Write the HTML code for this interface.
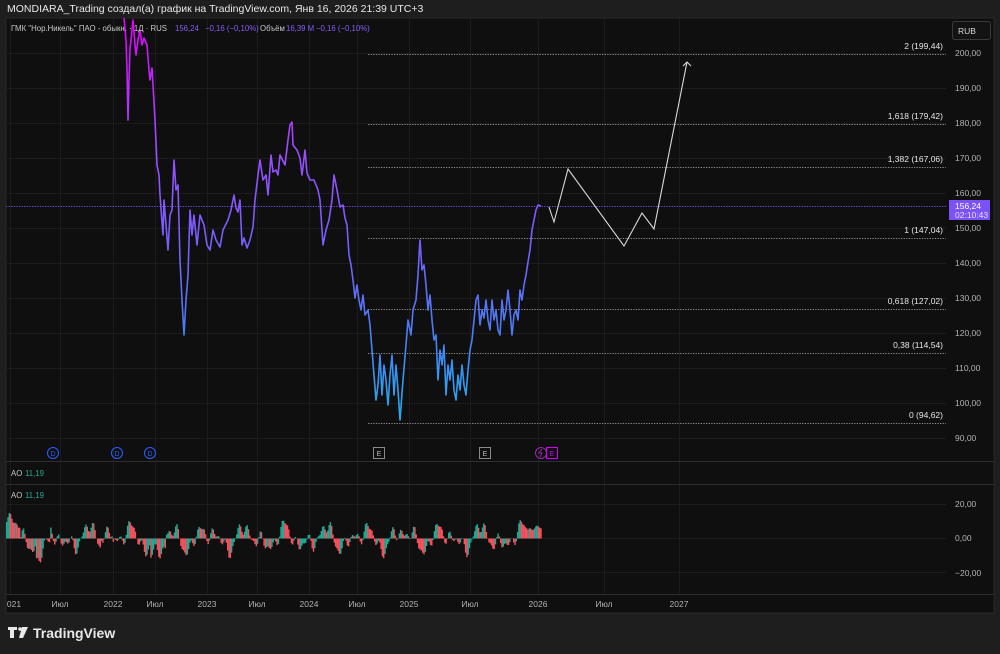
<!DOCTYPE html>
<html><head><meta charset="utf-8">
<style>
html,body{margin:0;padding:0;background:#1e1e1e;width:1000px;height:654px;overflow:hidden;font-family:"Liberation Sans","DejaVu Sans",sans-serif;}
#hdr{position:absolute;left:7px;top:3px;font-size:10.5px;color:#e8e8e8;}
#chart{position:absolute;left:0;top:0;}
</style></head><body>
<svg id="chart" width="1000" height="654" xmlns="http://www.w3.org/2000/svg" font-family="Liberation Sans, DejaVu Sans, sans-serif">
<defs>
<linearGradient id="pg" gradientUnits="userSpaceOnUse" x1="0" y1="20" x2="0" y2="425">
<stop offset="0" stop-color="#e000ff"/>
<stop offset="0.32" stop-color="#9c4dff"/>
<stop offset="0.52" stop-color="#7b5cff"/>
<stop offset="0.77" stop-color="#4a7cf5"/>
<stop offset="1" stop-color="#22b0ee"/>
</linearGradient>
</defs>
<rect x="0" y="0" width="1000" height="654" fill="#1e1e1e"/>
<rect x="6" y="18" width="988" height="595" fill="#0f0f0f" stroke="#2a2a2a" stroke-width="1"/>
<g id="grid" stroke="#1c1c1c" stroke-width="1"></g>
<line x1="6" y1="461.5" x2="994" y2="461.5" stroke="#2e2e2e"/>
<line x1="6" y1="484.5" x2="994" y2="484.5" stroke="#2e2e2e"/>
<line x1="6" y1="594.5" x2="994" y2="594.5" stroke="#2e2e2e"/>
<g stroke="#8a8a8a" stroke-width="1" stroke-dasharray="1.3 1.3">
<line x1="368" y1="54.5" x2="946" y2="54.5"/>
<line x1="368" y1="124.5" x2="946" y2="124.5"/>
<line x1="368" y1="167.5" x2="946" y2="167.5"/>
<line x1="368" y1="238.5" x2="946" y2="238.5"/>
<line x1="368" y1="309.5" x2="946" y2="309.5"/>
<line x1="368" y1="353.5" x2="946" y2="353.5"/>
<line x1="368" y1="423.5" x2="946" y2="423.5"/>
</g>
<line x1="6" y1="206.5" x2="946" y2="206.5" stroke="#6a4ce0" stroke-dasharray="1.3 1.3"/>
<g font-size="8.5" fill="#e6e6e6" text-anchor="end">
<text x="943" y="49">2 (199,44)</text>
<text x="943" y="119">1,618 (179,42)</text>
<text x="943" y="162">1,382 (167,06)</text>
<text x="943" y="233">1 (147,04)</text>
<text x="943" y="304">0,618 (127,02)</text>
<text x="943" y="348">0,38 (114,54)</text>
<text x="943" y="418">0 (94,62)</text>
</g>
<polyline fill="none" stroke="url(#pg)" stroke-width="1.6" stroke-linejoin="round" points="124,18 126,40 127,70 128,120 129,80 130,50 132,30 133,20 135,45 136,55 138,40 140,30 142,45 144,38 147,45 149,70 150,80 152,68 153,85 155,120 157,165 159,175 160,195 162,222 163,235 164,200 166,225 168,250 170,215 172,210 174,160 176,190 178,185 180,260 182,300 184,335 186,300 188,275 190,210 192,235 194,215 197,245 200,215 204,225 207,245 210,250 213,230 216,240 220,247 223,230 228,220 231,210 234,195 236,208 238,212 240,200 242,245 244,238 247,248 250,240 253,227 255,200 258,175 260,160 263,180 266,175 268,195 271,155 273,172 276,170 278,175 280,155 285,165 288,140 290,125 292,122 293,145 297,150 300,158 302,175 305,150 307,173 310,180 314,180 318,190 320,200 323,245 326,230 329,220 332,200 334,175 337,190 340,207 343,205 345,218 347,225 349,255 351,265 353,280 355,298 357,285 359,300 361,310 363,295 365,315 368,310 370,325 372,350 374,375 376,400 378,385 380,355 382,395 384,365 386,380 388,405 390,375 392,355 394,395 396,365 398,390 400,420 403,380 406,345 408,320 411,335 413,310 416,300 418,275 420,240 422,270 424,265 426,285 428,310 430,295 432,320 434,340 436,335 438,380 440,350 442,365 444,345 446,395 448,365 450,380 452,360 454,390 456,400 458,375 460,390 462,365 464,385 466,395 468,370 470,350 472,340 474,320 476,300 478,295 480,325 482,310 484,318 486,300 488,320 490,330 492,300 494,320 496,310 498,330 500,335 502,300 504,320 506,310 508,290 510,310 512,335 514,315 516,310 518,320 520,290 522,300 524,285 526,275 528,262 530,250 532,230 534,220 536,210 538,205 541,206"/>
<polyline fill="none" stroke="#d8d8d8" stroke-width="1.1" points="549,207 554,222 568,169 624,246 642,213 654,229 687,62"/>
<polyline fill="none" stroke="#d8d8d8" stroke-width="1.1" points="683,66 687,62 691,66"/>
<g font-size="8.5" fill="#b2b2b2">
<text x="955" y="56">200,00</text><text x="955" y="91">190,00</text><text x="955" y="126">180,00</text>
<text x="955" y="161">170,00</text><text x="955" y="196">160,00</text><text x="955" y="231">150,00</text>
<text x="955" y="266">140,00</text><text x="955" y="301">130,00</text><text x="955" y="336">120,00</text>
<text x="955" y="371">110,00</text><text x="955" y="406">100,00</text><text x="955" y="441">90,00</text>
<text x="955" y="507">20,00</text><text x="955" y="541">0,00</text><text x="955" y="576">−20,00</text>
</g>
<rect x="952.5" y="21.5" width="38" height="18" rx="2" fill="#131313" stroke="#3a3a3a"/>
<text x="958" y="34" font-size="8.5" fill="#d8d8d8">RUB</text>
<rect x="949" y="200" width="41" height="20" fill="#7b52f6"/>
<text x="955" y="209" font-size="8.5" fill="#fff">156,24</text>
<text x="955" y="218" font-size="8.5" fill="#e8e0ff">02:10:43</text>
<g id="ao"></g>
<g font-size="7.8">
<text x="11" y="31" fill="#c8c8c8" textLength="156" lengthAdjust="spacingAndGlyphs">ГМК "Нор.Никель" ПАО - обыкн. · 1Д · RUS</text>
<text x="175" y="31" fill="#8a5cf6">156,24</text>
<text x="205" y="31" fill="#8a5cf6">−0,16 (−0,10%)</text>
<text x="260" y="31" fill="#c8c8c8">Объём</text>
<text x="286" y="31" fill="#8a5cf6">16,39 M</text>
<text x="316" y="31" fill="#8a5cf6">−0,16 (−0,10%)</text>
<text x="11" y="476" fill="#c8c8c8">AO</text><text x="25" y="476" fill="#22ab94">11,19</text>
<text x="11" y="498" fill="#c8c8c8">AO</text><text x="25" y="498" fill="#22ab94">11,19</text>
</g>
<g font-size="7" text-anchor="middle">
<circle cx="53" cy="453" r="5.5" fill="none" stroke="#2962ff"/><text x="53" y="456" fill="#2962ff">D</text>
<circle cx="117" cy="453" r="5.5" fill="none" stroke="#2962ff"/><text x="117" y="456" fill="#2962ff">D</text>
<circle cx="150" cy="453" r="5.5" fill="none" stroke="#2962ff"/><text x="150" y="456" fill="#2962ff">D</text>
<rect x="373.5" y="447.5" width="11" height="11" fill="none" stroke="#8a8a8a"/><text x="379" y="456" fill="#bbb">E</text>
<rect x="479.5" y="447.5" width="11" height="11" fill="none" stroke="#8a8a8a"/><text x="485" y="456" fill="#bbb">E</text>
<circle cx="541" cy="453" r="5.5" fill="none" stroke="#9c27b0"/><path d="M542 449l-3 4h3l-2 4" fill="none" stroke="#9c27b0" stroke-width="0.9"/>
<rect x="546.5" y="447.5" width="11" height="11" fill="none" stroke="#d500f9"/><text x="552" y="456" fill="#d500f9">E</text>
</g>
<g font-size="8.5" fill="#b2b2b2" text-anchor="middle">
<text x="14" y="607">021</text><text x="60" y="607">Июл</text><text x="113" y="607">2022</text>
<text x="155" y="607">Июл</text><text x="207" y="607">2023</text><text x="257" y="607">Июл</text>
<text x="309" y="607">2024</text><text x="357" y="607">Июл</text><text x="409" y="607">2025</text>
<text x="470" y="607">Июл</text><text x="538" y="607">2026</text><text x="604" y="607">Июл</text>
<text x="679" y="607">2027</text>
</g>
<g fill="#e8e8e8">
<path d="M8 627h9v3h-3v8h-4v-8h-2z"/>
<circle cx="20" cy="629" r="1.8"/>
<path d="M22 627h6l-5 11h-4z"/>
<text x="33" y="638" font-size="14" font-weight="bold">TradingView</text>
</g>
</svg>
<div id="hdr">MONDIARA_Trading создал(а) график на TradingView.com, Янв 16, 2026 21:39 UTC+3</div>
<script>
var g=document.getElementById('grid'),ns='http://www.w3.org/2000/svg';
[53,88,123,158,193,228,263,298,333,368,403,438,504,538,572].forEach(function(y){var l=document.createElementNS(ns,'line');l.setAttribute('x1',6);l.setAttribute('x2',946);l.setAttribute('y1',y+.5);l.setAttribute('y2',y+.5);g.appendChild(l);});
[10,60,113,155,207,257,309,357,409,470,538,604,679].forEach(function(x){var l=document.createElementNS(ns,'line');l.setAttribute('x1',x+.5);l.setAttribute('x2',x+.5);l.setAttribute('y1',18);l.setAttribute('y2',594);g.appendChild(l);});
var ao=document.getElementById('ao');
function f(x){return 7*Math.sin(x*0.16)+5*Math.sin(x*0.29+1)+4*Math.sin(x*0.53+2)+3*Math.sin(x*0.9)+(x<20?12:0)+(x>35&&x<50?-14:0)+(x>150&&x<165?-12:0)+(x>100&&x<112?8:0);}
var prev=f(5);
for(var x=6;x<541;x+=1.3){var v=f(x);if(x>525)v=Math.abs(v)*0.3+7;var h=v*1.2;var r=document.createElementNS(ns,'rect');r.setAttribute('x',x);r.setAttribute('width',1.4);r.setAttribute('y',h>0?538.5-h:538.5);r.setAttribute('height',Math.abs(h));r.setAttribute('fill',v>=prev?'#22ab94':'#f7525f');ao.appendChild(r);prev=v;}
</script>
</body></html>
